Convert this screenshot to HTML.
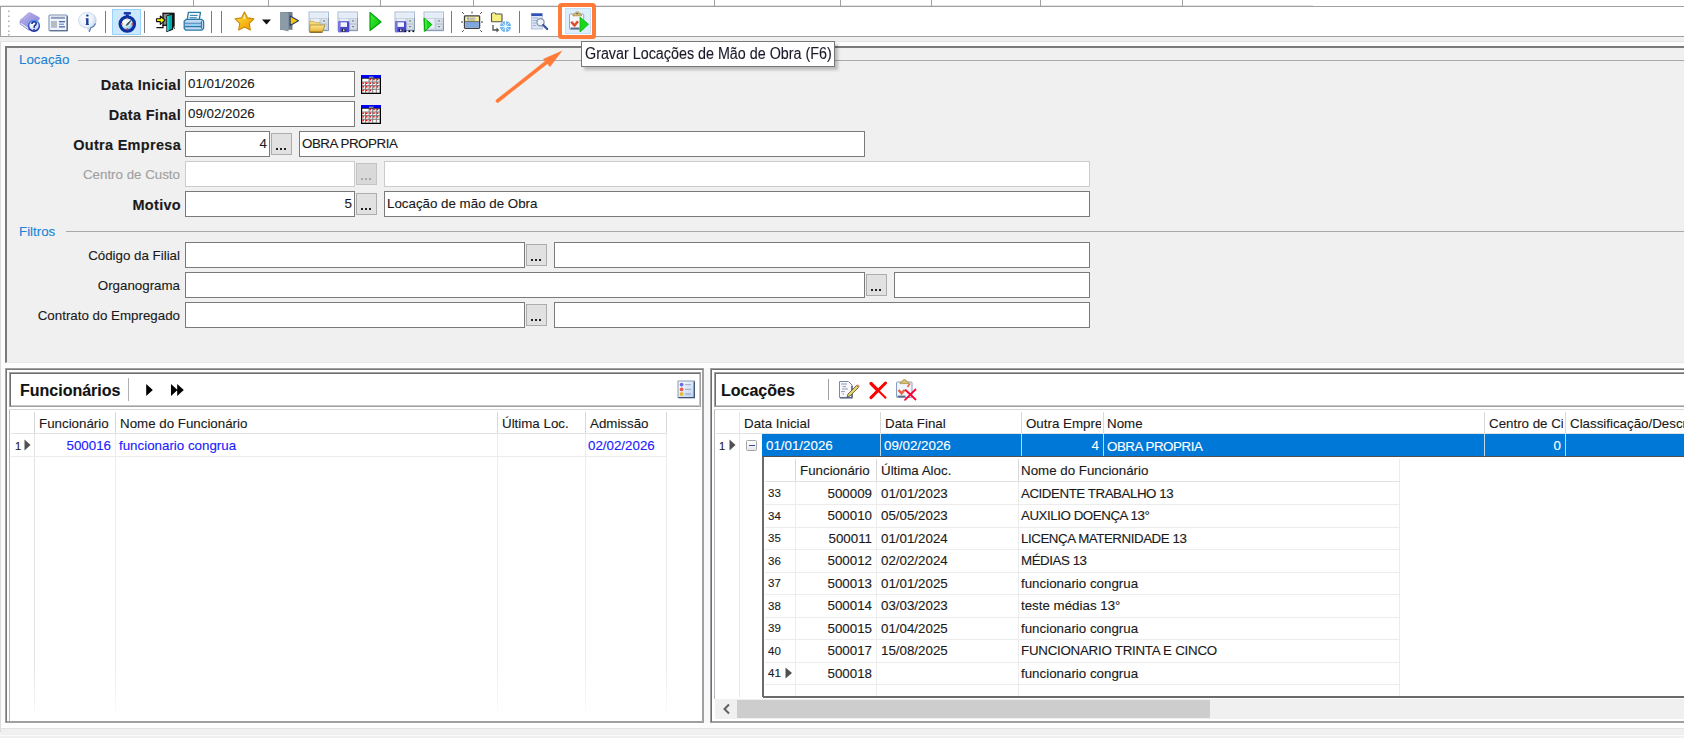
<!DOCTYPE html>
<html><head><meta charset="utf-8">
<style>
*{margin:0;padding:0;box-sizing:border-box}
html,body{width:1684px;height:738px;overflow:hidden;background:#f0f0f0;font-family:"Liberation Sans",sans-serif;font-size:13.33px;color:#1a1a1a}
.a{position:absolute}
.t{position:absolute;white-space:nowrap;line-height:16px;font-size:13.33px;-webkit-text-stroke:0.12px currentColor}
.b{font-weight:bold;letter-spacing:0.3px;font-size:14.5px}
.r{text-align:right}
.inp{position:absolute;background:#fff;border:1px solid #7a7a7a;height:26px}
.dis{border-color:#cccccc}
.btn{position:absolute;background:#e1e1e1;border:1px solid #adadad;width:21px;height:22px}
.btn i{position:absolute;left:4px;top:14px;width:2px;height:2px;background:#222;box-shadow:4px 0 0 #222,8px 0 0 #222}
.btn.dis{background:#d9d9d9;border-color:#c4c4c4}
.btn.dis i{background:#a8a8a8;box-shadow:4px 0 0 #a8a8a8,8px 0 0 #a8a8a8}
.hl{position:absolute;height:1px;background:#e8e8e8}
.vl{position:absolute;width:1px;background:#e3e3e3}
.ico{position:absolute}
</style></head>
<body>
<!-- top ruler strip -->
<div class="a" style="left:0;top:0;width:1684px;height:6px;background:#fff"></div>
<div class="a" style="left:0;top:6px;width:1684px;height:1px;background:#a0a0a0"></div>
<div class="a" style="left:0;top:5px;width:1313px;height:1px;background:#e4e4e4"></div>
<div class="a" style="left:193px;top:0;width:1px;height:6px;background:#a0a0a0"></div>
<div class="a" style="left:268px;top:0;width:1px;height:6px;background:#a0a0a0"></div>
<div class="a" style="left:380px;top:0;width:1px;height:6px;background:#a0a0a0"></div>
<div class="a" style="left:473px;top:0;width:1px;height:6px;background:#a0a0a0"></div>
<div class="a" style="left:714px;top:0;width:1px;height:6px;background:#a0a0a0"></div>
<div class="a" style="left:840px;top:0;width:1px;height:6px;background:#a0a0a0"></div>
<div class="a" style="left:931px;top:0;width:1px;height:6px;background:#a0a0a0"></div>
<div class="a" style="left:1040px;top:0;width:1px;height:6px;background:#a0a0a0"></div>
<div class="a" style="left:1182px;top:0;width:1px;height:6px;background:#a0a0a0"></div>

<!-- toolbar -->
<div class="a" id="toolbar" style="left:0;top:7px;width:1684px;height:30px;background:#fff;border-left:1px solid #a0a0a0;border-bottom:1px solid #a0a0a0"></div>
<!-- toolbar grip & separators -->
<svg class="ico" style="left:6px;top:9px" width="5" height="27"><g fill="#b4b4b4"><rect x="2" y="1.5" width="1.6" height="1.6"/><rect x="2" y="6.5" width="1.6" height="1.6"/><rect x="2" y="11.5" width="1.6" height="1.6"/><rect x="2" y="16.5" width="1.6" height="1.6"/><rect x="2" y="21.5" width="1.6" height="1.6"/><rect x="2" y="25" width="1.6" height="1.6"/></g></svg>
<div class="a" style="left:105px;top:11px;width:1px;height:22px;background:#7a7a7a"></div>
<div class="a" style="left:112px;top:9px;width:29px;height:26px;background:#cce8ff;border:1px solid #99d1ff"></div>
<div class="a" style="left:144px;top:11px;width:1px;height:22px;background:#7a7a7a"></div>
<div class="a" style="left:211px;top:11px;width:1px;height:22px;background:#7a7a7a"></div>
<div class="a" style="left:221px;top:11px;width:1px;height:22px;background:#7a7a7a"></div>
<div class="a" style="left:451px;top:11px;width:1px;height:22px;background:#7a7a7a"></div>
<div class="a" style="left:519px;top:11px;width:1px;height:22px;background:#7a7a7a"></div>
<div class="a" style="left:565px;top:8px;width:26px;height:26px;background:#ddeefc;border:1px solid #c4e0f8"></div>
<div class="a" style="left:557.5px;top:2.5px;width:38px;height:36px;border:4.2px solid #ff7b3a;border-radius:3.5px"></div>



<!-- upper panel -->
<div class="a" style="left:0;top:41px;width:1684px;height:1px;background:#e3e3e3"></div>
<div class="a" style="left:0;top:42px;width:1px;height:690px;background:#dcdcdc"></div>
<div class="a" style="left:1px;top:42px;width:1683px;height:4px;background:#fdfdfd"></div>
<div class="a" style="left:1px;top:42px;width:4px;height:686px;background:#fdfdfd"></div>
<div class="a" style="left:5px;top:46px;width:1679px;height:317px;border-top:2px solid #7a7a7a;border-left:2px solid #7a7a7a;border-bottom:1px solid #e6e6e6;background:#f0f0f0"></div>
<div class="a" style="left:5px;top:363px;width:1679px;height:5px;background:#fdfdfd"></div>

<!-- group Locação -->
<div class="t" style="left:19px;top:52px;color:#1c84d4">Locação</div>
<div class="a" style="left:78px;top:60px;width:1606px;height:1px;background:#a9a9a9"></div>

<div class="t b r" style="left:0;width:181px;top:77px">Data Inicial</div>
<div class="inp" style="left:185px;top:71px;width:170px"></div>
<div class="t" style="left:188px;top:76px">01/01/2026</div>
<svg class="ico" style="left:361px;top:74.5px" width="20" height="19" viewBox="0 0 20 19"><rect x="0" y="0" width="20" height="19" fill="#000"/><rect x="1" y="3.5" width="18" height="14.5" fill="#7a7a7a"/><rect x="0" y="0" width="20" height="2.8" fill="#0000ff"/><rect x="8" y="1.6" width="4.5" height="1.2" fill="#a8a898"/><rect x="1.40" y="3.90" width="6.20" height="2.62" fill="#fff"/><rect x="8.60" y="3.90" width="2.60" height="2.62" fill="#fff"/><rect x="8.60" y="3.90" width="1.5" height="1.4" fill="#f00000"/><rect x="12.20" y="3.90" width="2.60" height="2.62" fill="#fff"/><rect x="12.20" y="3.90" width="1.5" height="1.4" fill="#f00000"/><rect x="15.80" y="3.90" width="2.60" height="2.62" fill="#fff"/><rect x="15.80" y="3.90" width="1.5" height="1.4" fill="#f00000"/><rect x="1.40" y="7.53" width="2.60" height="2.62" fill="#fff"/><rect x="1.40" y="7.53" width="1.5" height="1.4" fill="#f00000"/><rect x="5.00" y="7.53" width="2.60" height="2.62" fill="#fff"/><rect x="5.00" y="7.53" width="1.5" height="1.4" fill="#f00000"/><rect x="8.60" y="7.53" width="2.60" height="2.62" fill="#fff"/><rect x="8.60" y="7.53" width="1.5" height="1.4" fill="#f00000"/><rect x="12.20" y="7.53" width="2.60" height="2.62" fill="#fff"/><rect x="12.20" y="7.53" width="1.5" height="1.4" fill="#f00000"/><rect x="15.80" y="7.53" width="2.60" height="2.62" fill="#fff"/><rect x="15.80" y="7.53" width="1.5" height="1.4" fill="#f00000"/><rect x="1.40" y="11.15" width="2.60" height="2.62" fill="#fff"/><rect x="1.40" y="11.15" width="1.5" height="1.4" fill="#f00000"/><rect x="5.00" y="11.15" width="2.60" height="2.62" fill="#fff"/><rect x="5.00" y="11.15" width="1.5" height="1.4" fill="#f00000"/><rect x="8.60" y="11.15" width="2.60" height="2.62" fill="#fff"/><rect x="8.60" y="11.15" width="1.5" height="1.4" fill="#f00000"/><rect x="12.20" y="11.15" width="2.60" height="2.62" fill="#fff"/><rect x="12.20" y="11.15" width="1.5" height="1.4" fill="#f00000"/><rect x="15.80" y="11.15" width="2.60" height="2.62" fill="#fff"/><rect x="15.80" y="11.15" width="1.5" height="1.4" fill="#f00000"/><rect x="1.40" y="14.78" width="2.60" height="2.62" fill="#fff"/><rect x="1.40" y="14.78" width="1.5" height="1.4" fill="#f00000"/><rect x="5.00" y="14.78" width="2.60" height="2.62" fill="#fff"/><rect x="5.00" y="14.78" width="1.5" height="1.4" fill="#f00000"/><rect x="8.60" y="14.78" width="2.60" height="2.62" fill="#fff"/><rect x="8.60" y="14.78" width="1.5" height="1.4" fill="#f00000"/><rect x="12.20" y="14.78" width="2.60" height="2.62" fill="#fff"/><rect x="15.80" y="14.78" width="2.60" height="2.62" fill="#fff"/></svg>

<div class="t b r" style="left:0;width:181px;top:107px">Data Final</div>
<div class="inp" style="left:185px;top:101px;width:170px"></div>
<div class="t" style="left:188px;top:106px">09/02/2026</div>
<svg class="ico" style="left:361px;top:104.5px" width="20" height="19" viewBox="0 0 20 19"><rect x="0" y="0" width="20" height="19" fill="#000"/><rect x="1" y="3.5" width="18" height="14.5" fill="#7a7a7a"/><rect x="0" y="0" width="20" height="2.8" fill="#0000ff"/><rect x="8" y="1.6" width="4.5" height="1.2" fill="#a8a898"/><rect x="1.40" y="3.90" width="6.20" height="2.62" fill="#fff"/><rect x="8.60" y="3.90" width="2.60" height="2.62" fill="#fff"/><rect x="8.60" y="3.90" width="1.5" height="1.4" fill="#f00000"/><rect x="12.20" y="3.90" width="2.60" height="2.62" fill="#fff"/><rect x="12.20" y="3.90" width="1.5" height="1.4" fill="#f00000"/><rect x="15.80" y="3.90" width="2.60" height="2.62" fill="#fff"/><rect x="15.80" y="3.90" width="1.5" height="1.4" fill="#f00000"/><rect x="1.40" y="7.53" width="2.60" height="2.62" fill="#fff"/><rect x="1.40" y="7.53" width="1.5" height="1.4" fill="#f00000"/><rect x="5.00" y="7.53" width="2.60" height="2.62" fill="#fff"/><rect x="5.00" y="7.53" width="1.5" height="1.4" fill="#f00000"/><rect x="8.60" y="7.53" width="2.60" height="2.62" fill="#fff"/><rect x="8.60" y="7.53" width="1.5" height="1.4" fill="#f00000"/><rect x="12.20" y="7.53" width="2.60" height="2.62" fill="#fff"/><rect x="12.20" y="7.53" width="1.5" height="1.4" fill="#f00000"/><rect x="15.80" y="7.53" width="2.60" height="2.62" fill="#fff"/><rect x="15.80" y="7.53" width="1.5" height="1.4" fill="#f00000"/><rect x="1.40" y="11.15" width="2.60" height="2.62" fill="#fff"/><rect x="1.40" y="11.15" width="1.5" height="1.4" fill="#f00000"/><rect x="5.00" y="11.15" width="2.60" height="2.62" fill="#fff"/><rect x="5.00" y="11.15" width="1.5" height="1.4" fill="#f00000"/><rect x="8.60" y="11.15" width="2.60" height="2.62" fill="#fff"/><rect x="8.60" y="11.15" width="1.5" height="1.4" fill="#f00000"/><rect x="12.20" y="11.15" width="2.60" height="2.62" fill="#fff"/><rect x="12.20" y="11.15" width="1.5" height="1.4" fill="#f00000"/><rect x="15.80" y="11.15" width="2.60" height="2.62" fill="#fff"/><rect x="15.80" y="11.15" width="1.5" height="1.4" fill="#f00000"/><rect x="1.40" y="14.78" width="2.60" height="2.62" fill="#fff"/><rect x="1.40" y="14.78" width="1.5" height="1.4" fill="#f00000"/><rect x="5.00" y="14.78" width="2.60" height="2.62" fill="#fff"/><rect x="5.00" y="14.78" width="1.5" height="1.4" fill="#f00000"/><rect x="8.60" y="14.78" width="2.60" height="2.62" fill="#fff"/><rect x="8.60" y="14.78" width="1.5" height="1.4" fill="#f00000"/><rect x="12.20" y="14.78" width="2.60" height="2.62" fill="#fff"/><rect x="15.80" y="14.78" width="2.60" height="2.62" fill="#fff"/></svg>

<div class="t b r" style="left:0;width:181px;top:137px">Outra Empresa</div>
<div class="inp" style="left:185px;top:131px;width:85px"></div>
<div class="t r" style="left:185px;width:82px;top:136px">4</div>
<div class="btn" style="left:271px;top:133px"><i></i></div>
<div class="inp" style="left:299px;top:131px;width:566px"></div>
<div class="t" style="left:302px;top:136px;letter-spacing:-0.45px">OBRA PROPRIA</div>

<div class="t r" style="left:0;width:180px;top:167px;color:#a0a0a0">Centro de Custo</div>
<div class="inp dis" style="left:185px;top:161px;width:170px"></div>
<div class="btn dis" style="left:356px;top:163px"><i></i></div>
<div class="inp dis" style="left:384px;top:161px;width:706px"></div>

<div class="t b r" style="left:0;width:181px;top:197px">Motivo</div>
<div class="inp" style="left:185px;top:191px;width:170px"></div>
<div class="t r" style="left:185px;width:167px;top:196px">5</div>
<div class="btn" style="left:356px;top:193px"><i></i></div>
<div class="inp" style="left:384px;top:191px;width:706px"></div>
<div class="t" style="left:387px;top:196px">Locação de mão de Obra</div>

<!-- group Filtros -->
<div class="t" style="left:19px;top:224px;color:#1c84d4">Filtros</div>
<div class="a" style="left:66px;top:231px;width:1618px;height:1px;background:#a9a9a9"></div>

<div class="t r" style="left:0;width:180px;top:248px">Código da Filial</div>
<div class="inp" style="left:185px;top:242px;width:340px"></div>
<div class="btn" style="left:526px;top:244px"><i></i></div>
<div class="inp" style="left:554px;top:242px;width:536px"></div>

<div class="t r" style="left:0;width:180px;top:278px">Organograma</div>
<div class="inp" style="left:185px;top:272px;width:680px"></div>
<div class="btn" style="left:866px;top:274px"><i></i></div>
<div class="inp" style="left:894px;top:272px;width:196px"></div>

<div class="t r" style="left:0;width:180px;top:308px">Contrato do Empregado</div>
<div class="inp" style="left:185px;top:302px;width:340px"></div>
<div class="btn" style="left:526px;top:304px"><i></i></div>
<div class="inp" style="left:554px;top:302px;width:536px"></div>

<!-- LOWER LEFT PANEL -->
<div class="a" style="left:5px;top:368px;width:699px;height:355px;border:1px solid #a0a0a0;box-shadow:inset 1px 1px 0 #7a7a7a,inset -1px -1px 0 #a0a0a0;background:#fff"></div>
<div class="a" style="left:9px;top:372px;width:692px;height:35px;border:1px solid #a0a0a0;box-shadow:inset 1px 1px 0 #6e6e6e,inset -1px -1px 0 #c8c8c8;background:#fff"></div>
<div class="t" style="left:20px;top:382px;font-size:16px;line-height:18px;font-weight:bold;color:#111">Funcionários</div>
<div class="a" style="left:127.5px;top:378px;width:1.6px;height:23px;background:#b0b0b0"></div>
<svg class="ico" style="left:145px;top:384px" width="40" height="13"><path d="M1.2 0 L7.8 6 L1.2 12Z M26 0 L32.5 6 L26 12Z M32.2 0 L38.8 6 L32.2 12Z" fill="#000"/></svg>

<!-- grid -->
<div class="a" style="left:9px;top:409px;width:692px;height:1px;background:#d8d8d8"></div>
<div class="a" style="left:9px;top:410px;width:1px;height:311px;background:#b8b8c0"></div>
<div class="vl" style="left:34px;top:412px;height:300px;background:linear-gradient(#e3e3e3,#e3e3e3 85%,#f8f8f8)"></div>
<div class="vl" style="left:115px;top:412px;height:300px;background:linear-gradient(#ececec,#ececec 85%,#fafafa)"></div>
<div class="vl" style="left:497px;top:412px;height:300px;background:linear-gradient(#ececec,#ececec 85%,#fafafa)"></div>
<div class="vl" style="left:585px;top:412px;height:300px;background:linear-gradient(#ececec,#ececec 85%,#fafafa)"></div>
<div class="vl" style="left:666px;top:412px;height:300px;background:linear-gradient(#ececec,#ececec 85%,#fafafa)"></div>
<div class="a" style="left:34px;top:412px;width:1px;height:21px;background:#d8d8d8"></div>
<div class="a" style="left:115px;top:412px;width:1px;height:21px;background:#d8d8d8"></div>
<div class="a" style="left:497px;top:412px;width:1px;height:21px;background:#d8d8d8"></div>
<div class="a" style="left:585px;top:412px;width:1px;height:21px;background:#d8d8d8"></div>
<div class="a" style="left:666px;top:412px;width:1px;height:21px;background:#d8d8d8"></div>
<div class="hl" style="left:11px;top:433px;width:656px;background:#e3e3e3"></div>
<div class="hl" style="left:11px;top:456px;width:656px;background:#ececec"></div>
<div class="t" style="left:39px;top:416px">Funcionário</div>
<div class="t" style="left:120px;top:416px">Nome do Funcionário</div>
<div class="t" style="left:502px;top:416px">Última Loc.</div>
<div class="t" style="left:590px;top:416px">Admissão</div>
<div class="t" style="left:15px;top:437.5px;font-size:11px">1</div>
<svg class="ico" style="left:24px;top:439px" width="8" height="12"><path d="M0.5 0.5 L6.5 6 L0.5 11.5Z" fill="#505050"/></svg>
<div class="t r" style="left:35px;width:76px;top:438px;color:#2020ff">500016</div>
<div class="t" style="left:119px;top:438px;color:#2020ff">funcionario congrua</div>
<div class="t" style="left:588px;top:438px;color:#2020ff">02/02/2026</div>

<!-- LOWER RIGHT PANEL -->
<div class="a" style="left:704px;top:368px;width:6px;height:355px;background:#f8f8f8"></div>
<div class="a" style="left:710px;top:368px;width:980px;height:355px;border:1px solid #a0a0a0;box-shadow:inset 1px 1px 0 #6e6e6e,inset -1px -1px 0 #a0a0a0;border-right:none;background:#fff"></div>
<div class="a" style="left:714px;top:372px;width:975px;height:35px;border:1px solid #a0a0a0;box-shadow:inset 1px 1px 0 #6e6e6e,inset -1px -1px 0 #c8c8c8;border-right:none;background:#fff"></div>
<div class="t" style="left:721px;top:382px;font-size:16px;line-height:18px;font-weight:bold;color:#111">Locações</div>
<div class="a" style="left:828px;top:379px;width:1px;height:21px;background:#a0a0a0"></div>
<div id="rpico" class="ico" style="left:838px;top:379px"></div>
<div class="a" style="left:714px;top:409px;width:970px;height:1px;background:#d8d8d8"></div>
<div class="a" style="left:714px;top:410px;width:1px;height:289px;background:#b8b8c0"></div>
<div class="vl" style="left:739px;top:412px;height:285px;background:#e6e6e6"></div>
<div class="a" style="left:880px;top:412px;width:1px;height:22px;background:#d8d8d8"></div>
<div class="a" style="left:1021px;top:412px;width:1px;height:22px;background:#d8d8d8"></div>
<div class="a" style="left:1103px;top:412px;width:1px;height:22px;background:#d8d8d8"></div>
<div class="a" style="left:1484px;top:412px;width:1px;height:22px;background:#d8d8d8"></div>
<div class="a" style="left:1565px;top:412px;width:1px;height:22px;background:#d8d8d8"></div>
<div class="hl" style="left:716px;top:433px;width:968px;background:#e3e3e3"></div>
<div class="t" style="left:744px;top:416px">Data Inicial</div>
<div class="t" style="left:885px;top:416px">Data Final</div>
<div class="t" style="left:1026px;top:416px;width:75px;overflow:hidden">Outra Empre</div>
<div class="t" style="left:1107px;top:416px">Nome</div>
<div class="t" style="left:1489px;top:416px;width:74px;overflow:hidden">Centro de Ci</div>
<div class="t" style="left:1570px;top:416px">Classificação/Descr</div>
<div class="a" style="left:762px;top:434px;width:922px;height:22px;background:#0078d7"></div>
<div class="a" style="left:762px;top:456px;width:922px;height:1px;background:#505050"></div>
<div class="a" style="left:880px;top:434px;width:1px;height:22px;background:#bcd8f0"></div>
<div class="a" style="left:1021px;top:434px;width:1px;height:22px;background:#bcd8f0"></div>
<div class="a" style="left:1103px;top:434px;width:1px;height:22px;background:#bcd8f0"></div>
<div class="a" style="left:1484px;top:434px;width:1px;height:22px;background:#bcd8f0"></div>
<div class="a" style="left:1565px;top:434px;width:1px;height:22px;background:#bcd8f0"></div>
<div class="t" style="left:719px;top:437.5px;font-size:11px">1</div>
<svg class="ico" style="left:729px;top:439px" width="8" height="12"><path d="M0.5 0.5 L6.5 6 L0.5 11.5Z" fill="#505050"/></svg>
<div class="a" style="left:746px;top:440px;width:11px;height:11px;border:1px solid #a4a4a4;border-radius:1.5px;background:linear-gradient(#fff,#e8e8e8)"></div>
<div class="a" style="left:748.5px;top:445px;width:6px;height:1.3px;background:#3050a8"></div>
<div class="t" style="left:766px;top:438px;color:#fff">01/01/2026</div>
<div class="t" style="left:884px;top:438px;color:#fff">09/02/2026</div>
<div class="t r" style="left:1022px;width:77px;top:438px;color:#fff">4</div>
<div class="t" style="left:1107px;top:438.5px;color:#fff;letter-spacing:-0.45px">OBRA PROPRIA</div>
<div class="t r" style="left:1485px;width:76px;top:438px;color:#fff">0</div>
<div class="a" style="left:762px;top:457px;width:638px;height:240px;border-left:2px solid #6a6a6a;background:#fff"></div>
<div class="a" style="left:763px;top:696px;width:921px;height:2px;background:#6a6a6a"></div>
<div class="a" style="left:795px;top:459px;width:1px;height:22px;background:#d8d8d8"></div>
<div class="a" style="left:876px;top:459px;width:1px;height:22px;background:#d8d8d8"></div>
<div class="a" style="left:1018px;top:459px;width:1px;height:22px;background:#d8d8d8"></div>
<div class="a" style="left:1399px;top:459px;width:1px;height:237px;background:#ececec"></div>
<div class="hl" style="left:765px;top:481px;width:635px;background:#e3e3e3"></div>
<div class="t" style="left:800px;top:463px">Funcionário</div>
<div class="t" style="left:881px;top:463px">Última Aloc.</div>
<div class="t" style="left:1021px;top:463px">Nome do Funcionário</div>
<div class="hl" style="left:765px;top:504.0px;width:635px;background:#ececec"></div>
<div class="t" style="left:768px;top:485.0px;font-size:11.5px">33</div>
<div class="t r" style="left:796px;width:76px;top:485.5px">500009</div>
<div class="t" style="left:881px;top:485.5px">01/01/2023</div>
<div class="t" style="left:1021px;top:485.5px;letter-spacing:-0.45px">ACIDENTE TRABALHO 13</div>
<div class="hl" style="left:765px;top:526.5px;width:635px;background:#ececec"></div>
<div class="t" style="left:768px;top:507.5px;font-size:11.5px">34</div>
<div class="t r" style="left:796px;width:76px;top:508.0px">500010</div>
<div class="t" style="left:881px;top:508.0px">05/05/2023</div>
<div class="t" style="left:1021px;top:508.0px;letter-spacing:-0.45px">AUXILIO DOENÇA 13°</div>
<div class="hl" style="left:765px;top:549.0px;width:635px;background:#ececec"></div>
<div class="t" style="left:768px;top:530.0px;font-size:11.5px">35</div>
<div class="t r" style="left:796px;width:76px;top:530.5px">500011</div>
<div class="t" style="left:881px;top:530.5px">01/01/2024</div>
<div class="t" style="left:1021px;top:530.5px;letter-spacing:-0.45px">LICENÇA MATERNIDADE 13</div>
<div class="hl" style="left:765px;top:571.5px;width:635px;background:#ececec"></div>
<div class="t" style="left:768px;top:552.5px;font-size:11.5px">36</div>
<div class="t r" style="left:796px;width:76px;top:553.0px">500012</div>
<div class="t" style="left:881px;top:553.0px">02/02/2024</div>
<div class="t" style="left:1021px;top:553.0px;letter-spacing:-0.45px">MÉDIAS 13</div>
<div class="hl" style="left:765px;top:594.0px;width:635px;background:#ececec"></div>
<div class="t" style="left:768px;top:575.0px;font-size:11.5px">37</div>
<div class="t r" style="left:796px;width:76px;top:575.5px">500013</div>
<div class="t" style="left:881px;top:575.5px">01/01/2025</div>
<div class="t" style="left:1021px;top:575.5px;letter-spacing:0">funcionario congrua</div>
<div class="hl" style="left:765px;top:616.5px;width:635px;background:#ececec"></div>
<div class="t" style="left:768px;top:597.5px;font-size:11.5px">38</div>
<div class="t r" style="left:796px;width:76px;top:598.0px">500014</div>
<div class="t" style="left:881px;top:598.0px">03/03/2023</div>
<div class="t" style="left:1021px;top:598.0px;letter-spacing:0">teste médias 13°</div>
<div class="hl" style="left:765px;top:639.0px;width:635px;background:#ececec"></div>
<div class="t" style="left:768px;top:620.0px;font-size:11.5px">39</div>
<div class="t r" style="left:796px;width:76px;top:620.5px">500015</div>
<div class="t" style="left:881px;top:620.5px">01/04/2025</div>
<div class="t" style="left:1021px;top:620.5px;letter-spacing:0">funcionario congrua</div>
<div class="hl" style="left:765px;top:661.5px;width:635px;background:#ececec"></div>
<div class="t" style="left:768px;top:642.5px;font-size:11.5px">40</div>
<div class="t r" style="left:796px;width:76px;top:643.0px">500017</div>
<div class="t" style="left:881px;top:643.0px">15/08/2025</div>
<div class="t" style="left:1021px;top:643.0px;letter-spacing:-0.25px">FUNCIONARIO TRINTA E CINCO</div>
<div class="hl" style="left:765px;top:684.0px;width:635px;background:#ececec"></div>
<div class="t" style="left:768px;top:665.0px;font-size:11.5px">41</div>
<div class="t r" style="left:796px;width:76px;top:665.5px">500018</div>
<div class="t" style="left:1021px;top:665.5px;letter-spacing:0">funcionario congrua</div>
<div class="a" style="left:795px;top:482px;width:1px;height:214px;background:#ececec"></div>
<div class="a" style="left:876px;top:482px;width:1px;height:214px;background:#ececec"></div>
<div class="a" style="left:1018px;top:482px;width:1px;height:214px;background:#ececec"></div>
<svg class="ico" style="left:785px;top:667px" width="8" height="12"><path d="M0.5 0.5 L7 6 L0.5 11.5Z" fill="#505050"/></svg>
<div class="a" style="left:715px;top:699px;width:969px;height:20px;background:#f0f0f0"></div>
<svg class="ico" style="left:721px;top:703px" width="12" height="12"><path d="M8 1.5 L3.5 6 L8 10.5" fill="none" stroke="#606060" stroke-width="2"/></svg>
<div class="a" style="left:737px;top:700px;width:473px;height:18px;background:#cdcdcd"></div>
<!-- bottom strip -->
<div class="a" style="left:1px;top:723px;width:1683px;height:5px;background:#fdfdfd"></div>
<div class="a" style="left:0;top:728px;width:1684px;height:1px;background:#e3e3e3"></div>
<div class="a" style="left:0;top:735px;width:1684px;height:1px;background:#fafafa"></div>
<!-- ICONS -->
<!-- book help -->
<svg class="ico" style="left:18px;top:10px" width="26" height="24" viewBox="0 0 26 24">
<defs><linearGradient id="gbook" x1="0" y1="0" x2="1" y2="1"><stop offset="0" stop-color="#b4b0ec"/><stop offset="0.6" stop-color="#9c96de"/><stop offset="1" stop-color="#7a74cc"/></linearGradient>
<radialGradient id="ghelp" cx="0.4" cy="0.35" r="0.7"><stop offset="0" stop-color="#ffffff"/><stop offset="0.55" stop-color="#e4ecff"/><stop offset="1" stop-color="#90b0f0"/></radialGradient>
<linearGradient id="gring" x1="0" y1="0" x2="0" y2="1"><stop offset="0" stop-color="#4a8af0"/><stop offset="1" stop-color="#1a2c9c"/></linearGradient></defs>
<path d="M1.8 11 Q1.8 10 2.8 9.2 L10.5 2.6 Q11.6 1.8 12.8 2.4 L21 7 Q22.4 7.8 21.6 9 L13 19.5 L1.8 13.8Z" fill="url(#gbook)"/>
<path d="M1.8 11.2 L1.8 14.2 L11 20.8 L12.6 19 L2.6 12.4Z" fill="#8c86d4"/>
<path d="M2.6 13.2 L10.6 18.8" stroke="#e0e8f4" stroke-width="1.3"/>
<path d="M4 9 L11.5 3.5 M6 9.6 L13 4.4" stroke="#c8c4f4" stroke-width="0.6" opacity="0.7"/>
<circle cx="16" cy="15.8" r="5.4" fill="url(#ghelp)" stroke="url(#gring)" stroke-width="1.5"/>
<path d="M13.9 14 Q13.9 11.7 16.1 11.7 Q18.2 11.7 18.2 13.6 Q18.2 15 16.5 15.8 L16.1 17.8" fill="none" stroke="#1c3490" stroke-width="1.6"/>
<circle cx="16" cy="19.6" r="0.85" fill="#1c3490"/>
</svg>
<!-- form -->
<svg class="ico" style="left:48px;top:14px" width="21" height="18" viewBox="0 0 21 18">
<rect x="1" y="1" width="18.2" height="15.8" rx="1" fill="#eef3fc" stroke="#7d94b4" stroke-width="1.1"/>
<path d="M19.2 2 V16.8 H2" fill="none" stroke="#4c627e" stroke-width="1.1"/>
<rect x="3" y="2.8" width="14" height="2" fill="#8a9ab8"/>
<rect x="3" y="7" width="6" height="6.8" fill="#b4bcc6"/>
<rect x="11" y="7" width="6" height="1.3" fill="#4a6aa8"/>
<rect x="11" y="9.6" width="5" height="1.3" fill="#7a96c8"/>
<rect x="11" y="12.2" width="6" height="1.3" fill="#4a6aa8"/>
</svg>
<!-- info -->
<svg class="ico" style="left:77px;top:11px" width="22" height="23" viewBox="0 0 22 23">
<defs><radialGradient id="ginfo" cx="0.4" cy="0.3" r="0.8"><stop offset="0" stop-color="#ffffff"/><stop offset="0.5" stop-color="#e8f2fc"/><stop offset="0.85" stop-color="#b4cce8"/><stop offset="1" stop-color="#8aa8d0"/></radialGradient></defs>
<path d="M10.3 1.5 C15.5 1.5 19.2 5 19.2 9.5 C19.2 13.5 16.5 16 13.8 16.8 L12.3 21 L10.5 17.3 C5.5 17 1.6 13.8 1.6 9.5 C1.6 5 5.2 1.5 10.3 1.5Z" fill="url(#ginfo)" stroke="#c0d0e4" stroke-width="0.7"/>
<path d="M18.6 12.5 C17.5 15.2 15.5 16.3 13.8 16.8 L12.3 21" fill="none" stroke="#5a7aa8" stroke-width="1.1"/>
<rect x="9.1" y="3.6" width="2.5" height="2" rx="0.9" fill="#1c3c9c"/>
<path d="M8.6 7.2 H11.5 V13.2 H12 V14 H8.6 V13.2 H9.1 V8.2 H8.6Z" fill="#1c3c9c"/>
</svg>
<!-- stopwatch -->
<svg class="ico" style="left:116px;top:11px" width="22" height="23" viewBox="0 0 22 23">
<defs><radialGradient id="gsw" cx="0.35" cy="0.3" r="0.8"><stop offset="0" stop-color="#ffffff"/><stop offset="0.5" stop-color="#c8ecfa"/><stop offset="1" stop-color="#3a90e0"/></radialGradient></defs>
<rect x="7.6" y="1" width="7.4" height="2.6" rx="1" fill="#1a3ca8"/>
<rect x="9.8" y="3.2" width="3" height="2.5" fill="#1a3ca8"/>
<circle cx="11.3" cy="13" r="7.2" fill="url(#gsw)" stroke="#0c30a0" stroke-width="3.2"/>
<path d="M10.2 14.6 L11.2 12.6 L15 9.4 L12.2 13.6Z" fill="#3a4a40" stroke="#3a4a40" stroke-width="0.7" stroke-linejoin="round"/>
<circle cx="11.3" cy="7.6" r="0.9" fill="#f08848"/>
<circle cx="6.1" cy="13" r="0.9" fill="#f08848"/>
<circle cx="16.4" cy="13" r="1" fill="#e84040"/>
<circle cx="11.3" cy="18.3" r="1" fill="#e83030"/>
</svg>
<!-- exit door -->
<svg class="ico" style="left:154px;top:11px" width="24" height="23" viewBox="0 0 24 23">
<rect x="9" y="2.3" width="10.8" height="12" fill="#8a8a8a" stroke="#111" stroke-width="1.3"/>
<path d="M19.8 2.3 V16.5" stroke="#111" stroke-width="1.3"/>
<path d="M12.9 5 L18.6 2.7 L18.6 18.3 L12.9 20.5Z" fill="#00a8a8" stroke="#111" stroke-width="1.1"/>
<path d="M13.2 5.3 L14.6 4.6 L14.6 19.8 L13.2 20.3Z" fill="#18e8f0"/>
<path d="M2.5 7.8 H6.3 V5 L11 9.2 L6.3 13.4 V10.6 H2.5Z" fill="#f8f800" stroke="#111" stroke-width="1.1" stroke-linejoin="round"/>
<path d="M2.4 16.6 H9 V14" fill="none" stroke="#111" stroke-width="1.2"/>
<path d="M19.5 16.4 L21 17.5" stroke="#111" stroke-width="1"/>
</svg>
<!-- printer -->
<svg class="ico" style="left:183px;top:11px" width="23" height="21" viewBox="0 0 23 21">
<path d="M5.4 1.3 H17.5 L16.2 8.6 H4.2Z" fill="#eef6fa" stroke="#2a7aa8" stroke-width="1.3" stroke-linejoin="round"/>
<path d="M7 4.4 H14.6 M6.5 6.8 H13.8" stroke="#2a7aa8" stroke-width="1"/>
<path d="M1.2 10.3 L3.4 8.3 H18.4 L20.6 10 V17.5 L18.6 19.2 H2.8 L1.2 17.4Z" fill="#c4daf0" stroke="#2a7aa8" stroke-width="1.3" stroke-linejoin="round"/>
<path d="M1.5 12.2 H19 M1.5 15.6 H19" stroke="#2a7aa8" stroke-width="1.1"/>
<rect x="2.2" y="12.8" width="15.8" height="2.2" fill="#a8c4ee"/>
<rect x="9.5" y="13.3" width="4" height="1.2" fill="#60f0f8"/>
<path d="M18.4 10 V17.8" stroke="#2a7aa8" stroke-width="1"/>
</svg>
<!-- star -->
<svg class="ico" style="left:233px;top:11px" width="23" height="21" viewBox="0 0 23 21">
<defs><linearGradient id="gstar" x1="0" y1="0" x2="0.8" y2="1"><stop offset="0" stop-color="#fff2a0"/><stop offset="0.45" stop-color="#f8c420"/><stop offset="1" stop-color="#f89c00"/></linearGradient></defs>
<path d="M11.50 1.00 L14.44 6.85 L20.92 7.84 L16.26 12.45 L17.32 18.91 L11.50 15.90 L5.68 18.91 L6.74 12.45 L2.08 7.84 L8.56 6.85Z" fill="url(#gstar)" stroke="#c88a08" stroke-width="1.1" stroke-linejoin="round"/><path d="M11.5 3.2 L12.6 8 L10.4 8Z" fill="#fff8d0" opacity="0.8"/>
</svg>
<svg class="ico" style="left:261px;top:19px" width="11" height="6" viewBox="0 0 11 6"><path d="M1 0.5 H10 L5.5 5.5Z" fill="#111"/></svg>
<!-- gray door with arrow -->
<svg class="ico" style="left:279px;top:11px" width="21" height="22" viewBox="0 0 21 22">
<rect x="1" y="1" width="12.5" height="17.8" fill="#6e7c86"/>
<path d="M1 1 L9.5 1.8 L9.5 20.5 L1 18.6Z" fill="#8c9ca6"/>
<path d="M11.2 5 L19.5 9.8 L11.2 14.5Z" fill="#f8c800" stroke="#2c3c78" stroke-width="1.1" stroke-linejoin="round"/>
</svg>

<svg class="ico" style="left:308px;top:11px" width="22" height="22" viewBox="0 0 22 22">
<defs><linearGradient id="gf1" x1="0" y1="0" x2="0" y2="1"><stop offset="0" stop-color="#f4f8fc"/><stop offset="1" stop-color="#c8d4e4"/></linearGradient></defs>
<rect x="1" y="1" width="19.5" height="18.6" fill="url(#gf1)" stroke="#aabcd2" stroke-width="1"/>
<rect x="2.5" y="2.5" width="16.5" height="3.5" fill="#e4ecf8"/>
<rect x="2.5" y="7.5" width="9.5" height="10.5" fill="#e8eef8" stroke="#b4c4d8" stroke-width="0.6"/>
<rect x="13" y="7.5" width="6" height="4.8" fill="#dfe4ea" stroke="#a8b8cc" stroke-width="0.5"/>
<rect x="13" y="13.3" width="6" height="4.8" fill="#dfe4ea" stroke="#a8b8cc" stroke-width="0.5"/>
<path d="M14.5 10.5 L16 8.8 L17.5 10.5Z M14.5 15 L16 16.8 L17.5 15Z" fill="#707c88"/>
<path d="M20.5 7 V19.6 H2" fill="none" stroke="#8898ae" stroke-width="1"/>
<defs><linearGradient id="gfold" x1="0" y1="0" x2="0" y2="1"><stop offset="0" stop-color="#fce890"/><stop offset="1" stop-color="#e8b030"/></linearGradient></defs>
<path d="M1.5 10.3 H6 L7.2 11.5 H12 V20.5 H1.5Z" fill="#f0d878" stroke="#c8a040" stroke-width="0.6"/>
<path d="M2 14 H17 L14.2 21.2 H1.5Z" fill="url(#gfold)" stroke="#a88020" stroke-width="0.7"/>
<path d="M1.8 21.2 H14.5" stroke="#604010" stroke-width="0.9"/>
</svg>
<svg class="ico" style="left:337px;top:11px" width="22" height="22" viewBox="0 0 22 22">
<defs><linearGradient id="gf2" x1="0" y1="0" x2="0" y2="1"><stop offset="0" stop-color="#f4f8fc"/><stop offset="1" stop-color="#c8d4e4"/></linearGradient></defs>
<rect x="1" y="1" width="19.5" height="18.6" fill="url(#gf2)" stroke="#aabcd2" stroke-width="1"/>
<rect x="2.5" y="2.5" width="16.5" height="3.5" fill="#e4ecf8"/>
<rect x="2.5" y="7.5" width="9.5" height="10.5" fill="#e8eef8" stroke="#b4c4d8" stroke-width="0.6"/>
<rect x="13" y="7.5" width="6" height="4.8" fill="#dfe4ea" stroke="#a8b8cc" stroke-width="0.5"/>
<rect x="13" y="13.3" width="6" height="4.8" fill="#dfe4ea" stroke="#a8b8cc" stroke-width="0.5"/>
<path d="M14.5 10.5 L16 8.8 L17.5 10.5Z M14.5 15 L16 16.8 L17.5 15Z" fill="#707c88"/>
<path d="M20.5 7 V19.6 H2" fill="none" stroke="#8898ae" stroke-width="1"/>
<rect x="1.3" y="10.3" width="11" height="11" rx="0.8" fill="#4a48c8"/>
<rect x="1.3" y="10.3" width="2" height="11" fill="#7a78e0"/>
<rect x="3.5" y="11.3" width="6.5" height="4.6" fill="#f4f4fc"/>
<rect x="5" y="18" width="3.5" height="2.6" fill="#222"/><rect x="6" y="18.4" width="1.5" height="1.8" fill="#ddd"/>
</svg>
<svg class="ico" style="left:368px;top:11px" width="15" height="21" viewBox="0 0 15 21">
<defs><linearGradient id="gplay" x1="0" y1="0" x2="1" y2="1"><stop offset="0" stop-color="#40f040"/><stop offset="1" stop-color="#00c000"/></linearGradient></defs>
<path d="M2 1.5 L13 11 L2 19.5Z" fill="url(#gplay)" stroke="#08a008" stroke-width="1.2" stroke-linejoin="round"/></svg>
<svg class="ico" style="left:394px;top:11px" width="22" height="22" viewBox="0 0 22 22">
<defs><linearGradient id="gf3" x1="0" y1="0" x2="0" y2="1"><stop offset="0" stop-color="#f4f8fc"/><stop offset="1" stop-color="#c8d4e4"/></linearGradient></defs>
<rect x="1" y="1" width="19.5" height="18.6" fill="url(#gf3)" stroke="#aabcd2" stroke-width="1"/>
<rect x="2.5" y="2.5" width="16.5" height="3.5" fill="#e4ecf8"/>
<rect x="2.5" y="7.5" width="9.5" height="10.5" fill="#e8eef8" stroke="#b4c4d8" stroke-width="0.6"/>
<rect x="13" y="7.5" width="6" height="4.8" fill="#dfe4ea" stroke="#a8b8cc" stroke-width="0.5"/>
<rect x="13" y="13.3" width="6" height="4.8" fill="#dfe4ea" stroke="#a8b8cc" stroke-width="0.5"/>
<path d="M14.5 10.5 L16 8.8 L17.5 10.5Z M14.5 15 L16 16.8 L17.5 15Z" fill="#707c88"/>
<path d="M20.5 7 V19.6 H2" fill="none" stroke="#8898ae" stroke-width="1"/>
<rect x="1.3" y="10.3" width="11" height="11" rx="0.8" fill="#4a48c8"/>
<rect x="1.3" y="10.3" width="2" height="11" fill="#7a78e0"/>
<rect x="3.5" y="11.3" width="6.5" height="4.6" fill="#f4f4fc"/>
<rect x="5" y="18" width="3.5" height="2.6" fill="#222"/><rect x="6" y="18.4" width="1.5" height="1.8" fill="#ddd"/><circle cx="11.3" cy="20.2" r="1" fill="#111"/><circle cx="15.3" cy="20.2" r="1" fill="#111"/><circle cx="19.3" cy="20.2" r="1" fill="#111"/>
</svg>
<svg class="ico" style="left:423px;top:11px" width="22" height="22" viewBox="0 0 22 22">
<defs><linearGradient id="gf4" x1="0" y1="0" x2="0" y2="1"><stop offset="0" stop-color="#f4f8fc"/><stop offset="1" stop-color="#c8d4e4"/></linearGradient></defs>
<rect x="1" y="1" width="19.5" height="18.6" fill="url(#gf4)" stroke="#aabcd2" stroke-width="1"/>
<rect x="2.5" y="2.5" width="16.5" height="3.5" fill="#e4ecf8"/>
<rect x="2.5" y="7.5" width="9.5" height="10.5" fill="#e8eef8" stroke="#b4c4d8" stroke-width="0.6"/>
<rect x="13" y="7.5" width="6" height="4.8" fill="#dfe4ea" stroke="#a8b8cc" stroke-width="0.5"/>
<rect x="13" y="13.3" width="6" height="4.8" fill="#dfe4ea" stroke="#a8b8cc" stroke-width="0.5"/>
<path d="M14.5 10.5 L16 8.8 L17.5 10.5Z M14.5 15 L16 16.8 L17.5 15Z" fill="#707c88"/>
<path d="M20.5 7 V19.6 H2" fill="none" stroke="#8898ae" stroke-width="1"/>
<path d="M1 7 L8.8 13.5 L1.8 20.5Z" fill="#10e010" stroke="#08a008" stroke-width="1" stroke-linejoin="round"/><path d="M2 8.5 L3 9.3 L3 18" stroke="#80ff80" stroke-width="0.8" fill="none"/>
</svg>
<svg class="ico" style="left:461px;top:11px" width="23" height="22" viewBox="0 0 23 22">
<path d="M4.3 4.8 H17.8 Q18.6 4.8 18.6 5.6 V16.6 Q18.6 17.4 17.8 17.4 H4.3 Q3.5 17.4 3.5 16.6 V5.6 Q3.5 4.8 4.3 4.8Z" fill="#f8f0a0" stroke="#404040" stroke-width="1.3"/>
<rect x="4.3" y="11" width="13.6" height="5.8" fill="#80a8e0"/>
<path d="M4 10.6 H18" stroke="#606060" stroke-width="0.9"/>
<rect x="6" y="6.6" width="2" height="1.2" fill="#4a90e0"/><rect x="8.3" y="6.6" width="6" height="1.2" fill="#a8b0b8"/><rect x="6" y="8.6" width="8.3" height="0.9" fill="#909090"/>
<g stroke="#404040" stroke-width="1"><path d="M1 1 L2.8 2.8 M11 0.5 V2.5 M21 1 L19.2 2.8 M0 11 H2 M20 11 H22 M1 21 L2.8 19.2 M21 21 L19.2 19.2"/></g>
</svg>
<svg class="ico" style="left:490px;top:11px" width="23" height="22" viewBox="0 0 23 22">
<path d="M1.5 3 Q1.5 2 2.5 2 H4.8 L5.8 3 H11.2 Q12 3 12 3.8 V10 Q12 10.8 11.2 10.8 H2.3 Q1.5 10.8 1.5 10Z" fill="#f8f080" stroke="#505050" stroke-width="1.1"/>
<path d="M2.8 2.6 H4.8" stroke="#e0e0e0" stroke-width="0.8"/>
<path d="M3 14 V19 H7" fill="none" stroke="#505050" stroke-width="1.3"/>
<path d="M6.5 16.6 L9.2 19 L6.5 21.4Z" fill="#505050"/>
<circle cx="15.5" cy="15.5" r="5.6" fill="#78b4ec"/>
<path d="M15.5 9.5 V21.5 M9.5 15.5 H21.5" stroke="#e8fcff" stroke-width="1.2"/>
<path d="M11.5 11.5 L19.5 19.5 M19.5 11.5 L11.5 19.5" stroke="#d0f4ff" stroke-width="0.9"/>
</svg>
<svg class="ico" style="left:530px;top:12px" width="19" height="19" viewBox="0 0 19 19">
<rect x="1.3" y="1.4" width="11" height="15.6" fill="#dbe4f4" stroke="#a8b8d8" stroke-width="0.8"/>
<rect x="1.3" y="1.4" width="11" height="2.6" fill="#3050b8"/>
<path d="M2.5 6 H8 M2.5 8.5 H7 M2.5 11 H6 M2.5 13.5 H6" stroke="#a0b4d8" stroke-width="1.1"/>
<circle cx="10.5" cy="10.3" r="3.6" fill="#eef4fc" stroke="#8894a8" stroke-width="1.3"/>
<path d="M13.2 13 L17.2 17" stroke="#3a50a0" stroke-width="2.2" stroke-linecap="round"/>
</svg>
<svg class="ico" style="left:568px;top:11px" width="23" height="22" viewBox="0 0 23 22">
<rect x="1.5" y="3" width="14.2" height="15.5" rx="0.8" fill="#f8f8fc" stroke="#9aa8c4" stroke-width="1"/>
<rect x="2.5" y="16.5" width="9" height="1.6" fill="#5a6a88"/>
<path d="M4.8 4.8 Q5 2.6 7 2.6 Q7.5 0.8 9.3 0.8 Q11.2 0.8 11.5 2.6 Q13.5 2.6 13.6 4.8Z" fill="#d8c070" stroke="#a89040" stroke-width="0.8"/>
<ellipse cx="9.2" cy="2.7" rx="1.3" ry="0.6" fill="#5a6a88"/>
<path d="M3.2 10.8 L6.6 14.6 L10 10.2" fill="none" stroke="#e04a28" stroke-width="2.4" stroke-linejoin="round"/>
<path d="M12 6 L20.5 13.3 L12 21Z" fill="#18d818" stroke="#10b010" stroke-width="0.8" stroke-linejoin="round"/>
</svg>
<svg class="ico" style="left:677px;top:380px" width="19" height="19" viewBox="0 0 19 19">
<defs><linearGradient id="glist" x1="0" y1="0" x2="1" y2="1"><stop offset="0" stop-color="#ffffff"/><stop offset="1" stop-color="#b8d0f4"/></linearGradient></defs>
<rect x="1" y="1" width="16.3" height="16.6" fill="url(#glist)" stroke="#8a9ab4" stroke-width="1"/>
<path d="M17.3 1.5 V17.6 H1.5" fill="none" stroke="#405470" stroke-width="1.3"/>
<circle cx="4.6" cy="4.6" r="1.9" fill="#6a6ae8"/>
<circle cx="4.6" cy="9.4" r="1.9" fill="#e86048"/>
<circle cx="4.6" cy="14" r="1.9" fill="#e8b830"/>
<path d="M8 4.6 H14 M8 9.4 H14 M8 14 H14" stroke="#a8b4c8" stroke-width="1.3"/>
</svg>
<svg class="ico" style="left:838px;top:380px" width="22" height="20" viewBox="0 0 22 20">
<path d="M1.5 1.5 H10.5 L14 5 V17.5 H1.5Z" fill="#f8f8fc" stroke="#7888a8" stroke-width="1"/>
<path d="M14 6 V18 H2" fill="none" stroke="#405070" stroke-width="1.2"/>
<path d="M3 4 H9 M4.5 6.6 H8 M4 9 H10 M3 11.6 H7 M4.5 14 H6" stroke="#8a9ab4" stroke-width="1"/>
<path d="M9 17 L10 14 L18.5 5.5 L20.5 7.5 L12 16Z" fill="#e8d070" stroke="#505030" stroke-width="0.8"/>
<path d="M18.5 5.5 L19.8 4.2 L21.8 6.2 L20.5 7.5Z" fill="#e88070"/>
</svg>
<svg class="ico" style="left:868px;top:381px" width="20" height="19" viewBox="0 0 20 19">
<path d="M3 2.5 L17.5 16.8" stroke="#ff0000" stroke-width="2" stroke-linecap="round"/>
<path d="M3 2.5 L10 9.5" stroke="#ff0000" stroke-width="3.2" stroke-linecap="round"/>
<path d="M17.5 2 L3 16.6" stroke="#ff0000" stroke-width="3" stroke-linecap="round"/>
</svg>
<svg class="ico" style="left:895px;top:378px" width="23" height="24" viewBox="0 0 23 24">
<rect x="1.5" y="4" width="15.5" height="15.5" rx="0.8" fill="#f0f4fc" stroke="#8a9cc0" stroke-width="1"/>
<rect x="2.5" y="17.6" width="8" height="1.6" fill="#5a6a88"/>
<path d="M5 5.6 Q5.2 3.4 7.2 3.4 Q7.7 1.6 9.5 1.6 Q11.4 1.6 11.7 3.4 Q13.7 3.4 13.8 5.6Z" fill="#d8c070" stroke="#a89040" stroke-width="0.8"/>
<path d="M3.5 12 L6.6 15.4 L9.5 12" fill="none" stroke="#e86040" stroke-width="2.4"/>
<path d="M12.5 9 L15 5.5" stroke="#e86040" stroke-width="1.5"/>
<path d="M10.5 12 L20.5 21.5 M20.5 11.5 L10 21.8" stroke="#ff0030" stroke-width="1.8" stroke-linecap="round"/>
</svg>
<!-- arrow -->
<svg class="ico" style="left:480px;top:40px" width="100" height="70"><path d="M17.5 61 L70 19.5" stroke="#ff7b3a" stroke-width="3.6" stroke-linecap="round"/><path d="M82.5 10.5 L63 19 L70 27Z" fill="#ff7b3a"/></svg>
<!-- tooltip -->
<div class="a" style="left:584px;top:44px;width:254px;height:26px;background:rgba(0,0,0,0.22);filter:blur(1.5px)"></div>
<div class="a" style="left:581px;top:41px;width:254px;height:26px;background:#fff;border:1px solid #767676"></div>
<div class="t" style="left:585px;top:45.3px;font-size:16px;line-height:18px;color:#1a1a2a;transform:scaleX(0.895);transform-origin:0 0">Gravar Locações de Mão de Obra (F6)</div>
</body></html>
